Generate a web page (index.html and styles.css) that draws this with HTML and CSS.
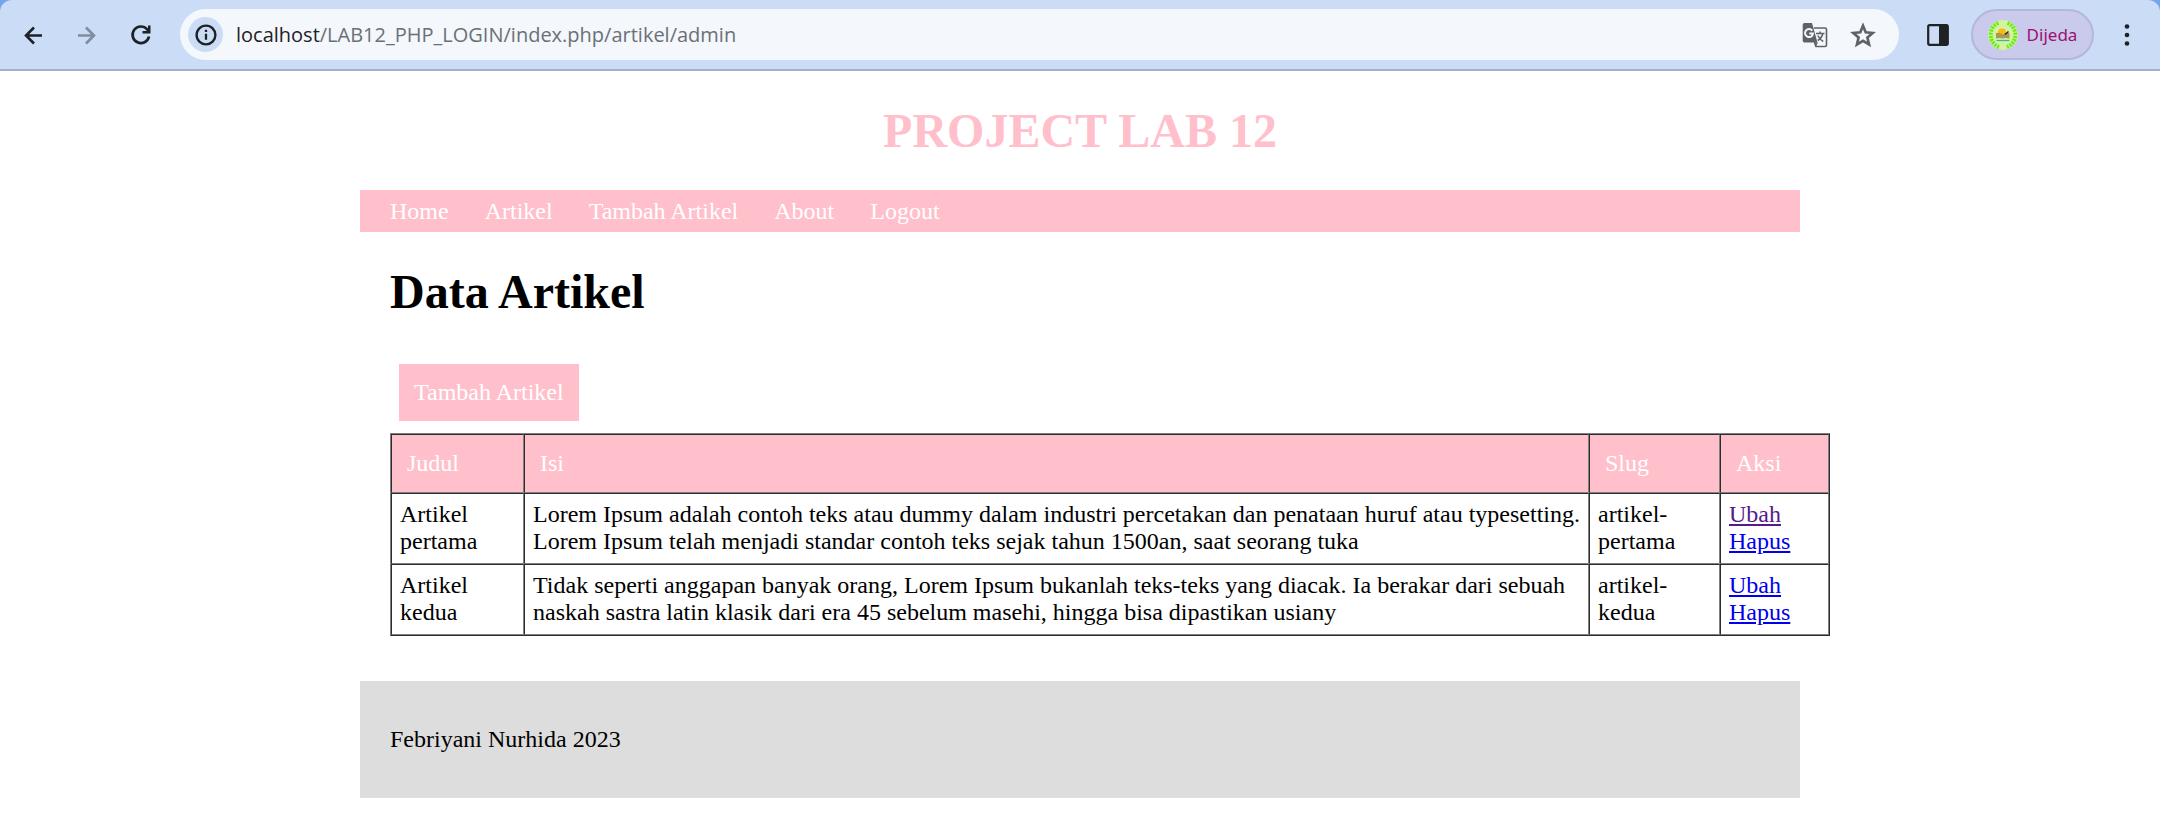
FILE: index.html
```html
<!DOCTYPE html>
<html lang="id">
<head>
<meta charset="utf-8">
<title>Data Artikel</title>
<link rel="stylesheet" href="styles.css">
</head>
<body>
<div class="frame">
<header class="toolbar">
  <button class="tool" aria-label="Back"><svg width="24" height="24" viewBox="0 0 24 24"><path d="M21 12.500H5M13 4.500l-8 8 8 8" fill="none" stroke="#1f2225" stroke-width="2.600"/></svg></button>
  <button class="tool" aria-label="Forward" disabled><svg width="24" height="24" viewBox="0 0 24 24"><path d="M3 12.500h16M11 4.500l8 8-8 8" fill="none" stroke="#818c9c" stroke-width="2.600"/></svg></button>
  <button class="tool" aria-label="Reload"><svg width="24" height="24" viewBox="0 0 24 24"><path d="M20 13.500A8.300 8.300 0 1 1 18.200 6.400L20 8.500" fill="none" stroke="#1f2225" stroke-width="2.700"/><path d="M21.500 2.500v8h-8V8h5.500V2.500z" fill="#1f2225"/></svg></button>
  <div class="omnibox">
    <button class="site-info" aria-label="Site information"><svg width="22" height="22" viewBox="0 0 22 22"><circle cx="11" cy="11" r="9.400" fill="none" stroke="#1f2225" stroke-width="2.400"/><path d="M11 9.800v6M11 5.800v2.300" stroke="#1f2225" stroke-width="2.300"/></svg></button>
    <label class="host" for="path">localhost</label>
    <input class="path" id="path" type="text" value="/LAB12_PHP_LOGIN/index.php/artikel/admin">
    <button class="action" aria-label="Translate"><svg width="26" height="26" viewBox="0 0 26 26"><path d="M12 6h11a1.500 1.500 0 0 1 1.500 1.500V23a1.500 1.500 0 0 1-1.500 1.500h-9L12.500 20" fill="none" stroke="#5f6368" stroke-width="1.600"/><path d="M2.500 1H10l5.500 19.500h-13A1.800 1.800 0 0 1 .7 18.700V2.800A1.800 1.800 0 0 1 2.500 1z" fill="#5f6368"/><path d="M12 20.500h4L13.500 25z" fill="#5f6368"/><path d="M10.300 8.800A4 4 0 1 0 11 11.500H7.300" fill="none" stroke="#f4f7fc" stroke-width="2"/><path d="M14 11.500h8.500M18 9.500v2M20.800 11.500c-.6 3-2.400 5.300-5 7M15.800 13.500c1.200 2.600 3 4.600 5.400 6" fill="none" stroke="#5f6368" stroke-width="1.500"/></svg></button>
    <button class="action" aria-label="Bookmark"><svg width="28" height="28" viewBox="0 0 26 26"><path d="M13 4.500l2.500 6 6.500.6-4.900 4.300 1.500 6.400L13 18.400l-5.600 3.400 1.500-6.400L4 11.100l6.500-.6z" fill="none" stroke="#5f6368" stroke-width="2.500"/></svg></button>
  </div>
  <button class="tool" aria-label="Side panel"><svg width="24" height="24" viewBox="0 0 24 24"><rect x="2.200" y="2.200" width="19.600" height="19.600" rx="1.500" fill="none" stroke="#1f2225" stroke-width="2.200"/><path d="M13 2h9v20h-9z" fill="#1f2225"/></svg></button>
  <button class="profile"><svg width="30" height="30" viewBox="0 0 30 30"><circle cx="15" cy="15" r="15" fill="#d4f3a0"/><path d="M10.500 3C0 7 0 23 11 27M19.500 3C30 7 30 23 19 27" fill="none" stroke="#6bea1c" stroke-width="4" stroke-dasharray="2.200 1"/><circle cx="14" cy="12.500" r="4" fill="#fdb515"/><path d="M8 13q4-1 6.500 1.500 3-2 7-1.500v5.500q-4-1-7 0-3-1-6.500 0z" fill="#a89a50"/><path d="M17 14.500l3.500-3" stroke="#222" stroke-width="1.500"/><path d="M8.500 20.500h13" stroke="#35b8a8" stroke-width="1.300"/></svg>Dijeda</button>
  <button class="tool menu" aria-label="Menu"><svg width="24" height="24" viewBox="0 0 24 24"><circle cx="12" cy="3.500" r="2.300"/><circle cx="12" cy="12" r="2.300"/><circle cx="12" cy="20.500" r="2.300"/></svg></button>
</header>
</div>
<div class="container">
  <h1 class="site-title">PROJECT LAB 12</h1>
  <nav class="nav">
    <a href="#">Home</a>
    <a href="#">Artikel</a>
    <a href="#">Tambah Artikel</a>
    <a href="#">About</a>
    <a href="#">Logout</a>
  </nav>
  <main class="content">
    <h2 class="heading">Data Artikel</h2>
    <a class="add" href="#">Tambah Artikel</a>
    <table class="articles">
      <thead>
        <tr><th class="title-col">Judul</th><th>Isi</th><th class="slug-col">Slug</th><th class="action-col">Aksi</th></tr>
      </thead>
      <tbody>
        <tr>
          <td>Artikel pertama</td>
          <td>Lorem Ipsum adalah contoh teks atau dummy dalam industri percetakan dan penataan huruf atau typesetting. Lorem Ipsum telah menjadi standar contoh teks sejak tahun 1500an, saat seorang tuka</td>
          <td>artikel-pertama</td>
          <td><a class="seen" href="#">Ubah</a> <a href="#">Hapus</a></td>
        </tr>
        <tr>
          <td>Artikel kedua</td>
          <td>Tidak seperti anggapan banyak orang, Lorem Ipsum bukanlah teks-teks yang diacak. Ia berakar dari sebuah naskah sastra latin klasik dari era 45 sebelum masehi, hingga bisa dipastikan usiany</td>
          <td>artikel-kedua</td>
          <td><a href="#">Ubah</a> <a href="#">Hapus</a></td>
        </tr>
      </tbody>
    </table>
  </main>
  <footer class="footer">Febriyani Nurhida 2023</footer>
</div>
</body>
</html>
```

FILE: styles.css
```css
* { box-sizing: border-box; }

body {
  margin: 0;
  background: #fff;
  color: #000;
  font: 24px/27px "Liberation Serif", "Times New Roman", serif;
}

button {
  border: 0;
  padding: 0;
  background: none;
  display: flex;
  align-items: center;
  justify-content: center;
  flex: none;
}

/* Browser toolbar */
.frame { background: #76a3ee; }

.toolbar {
  display: flex;
  align-items: center;
  padding: 9px 6px;
  background: #cbdcf6;
  border-bottom: 2px solid #a2b0ca;
  border-radius: 12px 12px 0 0;
}

.tool { width: 54px; height: 51px; }

.omnibox {
  flex: 1;
  display: flex;
  align-items: center;
  height: 51px;
  margin: 0 12px;
  padding: 0 12px 0 8px;
  border-radius: 26px;
  background: #f4f7fc;
}

.site-info {
  width: 35px;
  height: 35px;
  border-radius: 50%;
  background: #cbdcf6;
}

.host, .path {
  font-family: "Open Sans", "Noto Sans", sans-serif;
  font-size: 20px;
  line-height: 30px;
}

.host { margin-left: 13px; color: #1f2225; }

.path {
  flex: 1;
  min-width: 0;
  padding: 0;
  border: 0;
  outline: 0;
  background: none;
  color: #6b7077;
}

.action { width: 48px; height: 48px; }

.profile {
  gap: 9px;
  width: 123px;
  height: 51px;
  margin: 0 6px;
  border: 2px solid #b4b6da;
  border-radius: 26px;
  background: #c9caec;
  color: #9c1070;
  font-family: "Noto Sans", sans-serif;
  font-size: 17px;
}

.menu { fill: #1f2225; }

/* Page */
.container {
  max-width: 1440px;
  margin: 0 auto;
  padding-top: 32px;
}

.site-title, .heading {
  margin: 0;
  font-size: 48px;
  line-height: 55px;
}

.site-title { color: pink; text-align: center; }

.nav {
  display: flex;
  gap: 36px;
  margin-top: 32px;
  padding: 8px 30px 7px;
  background: pink;
}

.nav a, .add { color: #fff; text-decoration: none; }

.content { padding: 32px 30px 45px; }

.add {
  display: block;
  width: fit-content;
  margin: 45px 9px 12px;
  padding: 15px;
  background: pink;
}

.articles {
  width: calc(100% + 60px);
  table-layout: fixed;
  border: 1px outset gray;
  border-spacing: 0;
}

.articles th, .articles td {
  border: 1px inset gray;
  text-align: left;
}

.articles th {
  padding: 15px;
  background: pink;
  color: #fff;
  font-weight: normal;
}

.articles td { padding: 7px 8px 8px; }

.title-col { width: 133px; }
.slug-col { width: 131px; }
.action-col { width: 109px; }

.articles a { color: #00e; }
.articles .seen { color: #551a8b; }

.footer { padding: 45px 30px; background: #ddd; }
```
